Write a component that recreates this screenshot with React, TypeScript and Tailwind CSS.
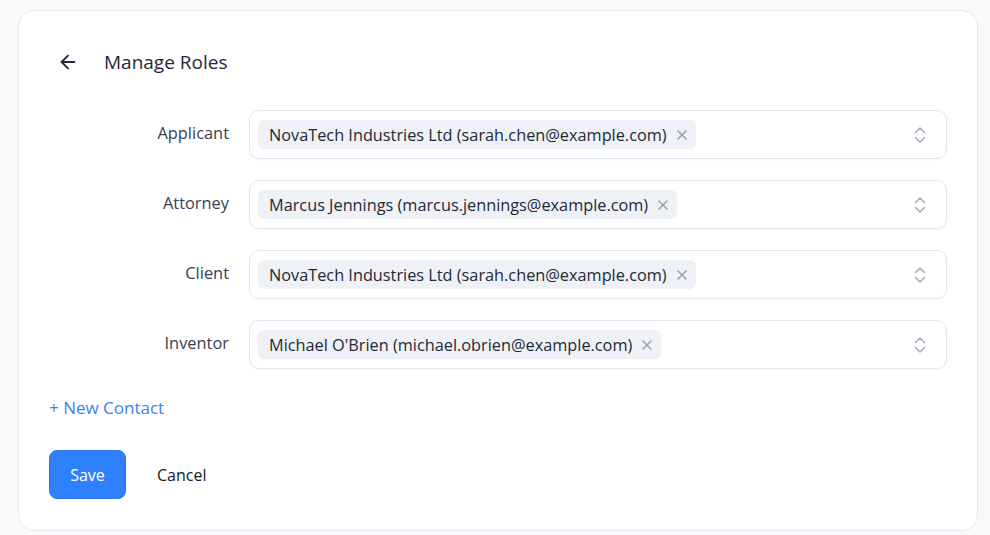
import React from "react";

interface RoleRow {
  label: string;
  contact: string;
}

const rows: RoleRow[] = [
  { label: "Applicant", contact: "NovaTech Industries Ltd (sarah.chen@example.com)" },
  { label: "Attorney", contact: "Marcus Jennings (marcus.jennings@example.com)" },
  { label: "Client", contact: "NovaTech Industries Ltd (sarah.chen@example.com)" },
  { label: "Inventor", contact: "Michael O'Brien (michael.obrien@example.com)" },
];

function ArrowLeft() {
  return (
    <svg width="22" height="22" viewBox="0 0 24 24" fill="none" stroke="currentColor" strokeWidth="2" strokeLinecap="round" strokeLinejoin="round">
      <path d="M19 12H5" />
      <path d="M12 19l-7-7 7-7" />
    </svg>
  );
}

function Chevrons() {
  return (
    <svg width="14" height="20" viewBox="0 0 14 20" fill="none" stroke="currentColor" strokeWidth="1.6" strokeLinecap="round" strokeLinejoin="round">
      <path d="M2.5 7.5L7 3l4.5 4.5" />
      <path d="M2.5 12.5L7 17l4.5-4.5" />
    </svg>
  );
}

function Cross() {
  return (
    <svg width="12" height="12" viewBox="0 0 12 12" fill="none" stroke="currentColor" strokeWidth="1.6" strokeLinecap="round">
      <path d="M2 2l8 8" />
      <path d="M10 2l-8 8" />
    </svg>
  );
}

export default function App() {
  return (
    <div
      className="min-h-screen bg-[#f8f9fb] pt-[10px] pl-[18px] pr-[12px] text-[#1f2937]"
      style={{ fontFamily: '"Open Sans", "Noto Sans", sans-serif' }}
    >
      <div className="h-[521px] rounded-[16px] border border-[#e3e7ee] bg-white pl-[30px] pr-[30px] pt-[38px]">
        <div className="flex items-center h-[26px]">
          <button className="ml-[8px] text-[#1f2937]">
            <ArrowLeft />
          </button>
          <h1 className="ml-[25px] text-[19px] text-[#1f2937]">Manage Roles</h1>
        </div>

        <div className="mt-[35px] flex flex-col gap-[21px]">
          {rows.map((row) => (
            <div key={row.label} className="flex items-center">
              <div className="w-[200px] shrink-0 pr-[20px] text-right text-[16.4px] text-[#374151] -mt-[2px]">
                {row.label}
              </div>
              <div className="flex-1 h-[49px] rounded-[10px] border border-[#e2e6ee] shadow-[0_1px_2px_rgba(0,0,0,0.04)] flex items-center pl-[8px] pr-[19px]">
                <div className="h-[29px] rounded-[6px] bg-[#eef1f5] flex items-center pl-[11px] pr-[8px] gap-[9px] pt-[2px]">
                  <span className="text-[16.3px] text-[#1f2937] whitespace-nowrap">{row.contact}</span>
                  <span className="text-[#9aa3b2] -mt-[2px]">
                    <Cross />
                  </span>
                </div>
                <span className="ml-auto text-[#a3aec0]">
                  <Chevrons />
                </span>
              </div>
            </div>
          ))}
        </div>

        <div className="mt-[26px]">
          <button className="text-[17px] text-[#3b82f6]">+ New Contact</button>
        </div>

        <div className="mt-[29px] flex items-center">
          <button className="w-[77px] h-[49px] rounded-[8px] bg-[#2f80ff] border border-[#2b74e8] text-white text-[16px] pt-[1px]">
            Save
          </button>
          <button className="ml-[31px] text-[16px] text-[#111827] pt-[1px]">Cancel</button>
        </div>
      </div>
    </div>
  );
}
